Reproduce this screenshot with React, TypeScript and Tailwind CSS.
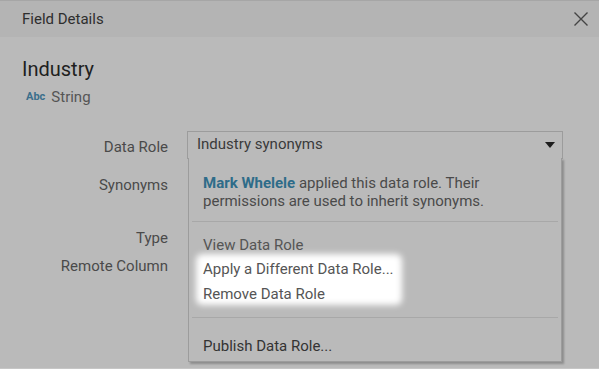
import React from "react";

const font = { fontFamily: "Roboto, 'Noto Sans', sans-serif" };

const Label = ({ children, className = "" }: { children: React.ReactNode; className?: string }) => (
  <div className={`text-right text-[15px] leading-[20px] text-[#4a4a4a] ${className}`}>{children}</div>
);

const App = () => {
  return (
    <div
      className="w-[599px] h-[369px] bg-[#bababa] border-t border-[#a6a6a6] border-b border-b-[#c6c6c6] overflow-hidden flex flex-col"
      style={font}
    >
      <div className="h-[36px] bg-[#b4b4b4] flex items-center justify-between pl-[22px] pr-[10px]">
        <span className="text-[15px] text-[#2e2e2e]">Field Details</span>
        <svg width="16" height="16" viewBox="0 0 16 16">
          <path d="M1.5 1.5 L14.5 14.5 M14.5 1.5 L1.5 14.5" stroke="#444" strokeWidth="1.4" fill="none" />
        </svg>
      </div>

      <div className="flex-1 px-[22px] pt-[19px]">
        <div className="text-[20px] leading-[26px] text-[#1f1f1f]">Industry</div>
        <div className="flex items-center gap-[6px] mt-[4px] ml-[4px]">
          <span className="text-[11px] font-bold text-[#3b6f8c]">Abc</span>
          <span className="text-[15px] text-[#555]">String</span>
        </div>

        <div className="flex mt-[22px]">
          <div className="w-[146px] flex flex-col">
            <Label className="mt-[6px]">Data Role</Label>
            <Label className="mt-[18px]">Synonyms</Label>
            <Label className="mt-[33px]">Type</Label>
            <Label className="mt-[8px]">Remote Column</Label>
          </div>

          <div className="ml-[19px] relative w-[376px]">
            <div className="h-[28px] border border-[#9c9c9c] flex items-center justify-between pl-[9px] pr-[7px]">
              <span className="text-[15px] text-[#3a3a3a]">Industry synonyms</span>
              <svg width="10" height="6" viewBox="0 0 10 6">
                <path d="M0 0 H10 L5 6 Z" fill="#1e1e1e" />
              </svg>
            </div>

            <div className="absolute left-[1px] top-[27px] w-[374px] h-[204px] bg-[#bababa] border-x border-b border-[#9c9c9c] shadow-[2px_2px_2px_rgba(0,0,0,0.25)] flex flex-col">
              <div className="pl-[14px] pt-[16px] pb-[11px] text-[15px] leading-[18px] text-[#4a4a4a]">
                <span className="font-bold text-[#2e6c89]">Mark Whelele</span> applied this data role. Their
                <br />
                permissions are used to inherit synonyms.
              </div>
              <div className="mx-[3px] h-px bg-[#a8a8a8]" />
              <div className="relative pl-[14px] pt-[11px] pb-[10px] text-[15px] text-[#555]">
                <div className="absolute left-[7px] top-[32px] w-[206px] h-[51px] bg-white rounded-[6px] blur-[3px]" />
                <div className="relative h-[24px] leading-[24px]">View Data Role</div>
                <div className="relative h-[25px] leading-[25px]">Apply a Different Data Role...</div>
                <div className="relative h-[25px] leading-[25px]">Remove Data Role</div>
              </div>
              <div className="mx-[3px] h-px bg-[#a8a8a8]" />
              <div className="pl-[14px] pt-[17px] text-[15px] text-[#333]">Publish Data Role...</div>
            </div>
          </div>
        </div>
      </div>
    </div>
  );
};

export default App;
